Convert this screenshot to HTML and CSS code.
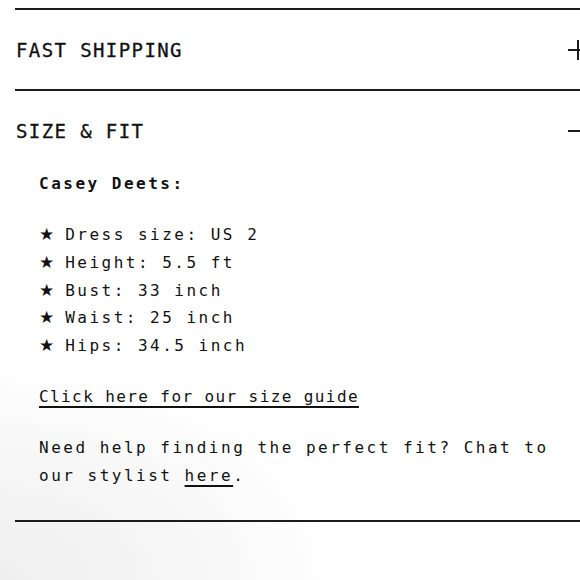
FILE: index.html
```html
<!DOCTYPE html>
<html lang="en">
<head>
<meta charset="utf-8">
<title>Size &amp; Fit</title>
<link rel="stylesheet" href="styles.css">
</head>
<body>
<section class="accordion">
  <div class="item">
    <div class="head">
      <span class="title">FAST SHIPPING</span>
      <span class="icon plus"></span>
    </div>
  </div>
  <div class="item open">
    <div class="head">
      <span class="title">SIZE &amp; FIT</span>
      <span class="icon minus"></span>
    </div>
    <div class="body">
      <p class="name">Casey Deets:</p>
      <ul class="stats">
        <li><span class="star">★</span> Dress size: US 2</li>
        <li><span class="star">★</span> Height: 5.5 ft</li>
        <li><span class="star">★</span> Bust: 33 inch</li>
        <li><span class="star">★</span> Waist: 25 inch</li>
        <li><span class="star">★</span> Hips: 34.5 inch</li>
      </ul>
      <p><a href="#" class="link guide">Click here for our size guide</a></p>
      <p>Need help finding the perfect fit? Chat to our stylist <a href="#" class="link">here</a>.</p>
    </div>
  </div>
</section>
</body>
</html>
```

FILE: styles.css
```css
html, body {
  margin: 0;
  padding: 0;
  height: 100%;
}
body {
  overflow: hidden;
  color: #111;
  font-family: "DejaVu Sans Mono", "Liberation Mono", monospace;
  background: radial-gradient(ellipse 60% 38% at 0% 100%, #efefef 0%, #f6f6f6 50%, #ffffff 100%);
}
.accordion {
  margin: 8px -8px 0 15px;
  border-top: 2px solid #1c1c1c;
}
.item {
  border-bottom: 2px solid #1c1c1c;
}
.head {
  display: flex;
  justify-content: space-between;
  align-items: center;
  height: 79px;
}
.title {
  font-size: 19px;
  letter-spacing: 1.4px;
  line-height: 24px;
  padding-left: 1px;
  -webkit-text-stroke: 0.3px #111;
}
.icon {
  position: relative;
  width: 20px;
  height: 20px;
  flex: none;
}
.icon::before,
.icon::after {
  content: "";
  position: absolute;
  background: #1c1c1c;
}
.icon::before {
  left: 0;
  right: 0;
  top: 9px;
  height: 2px;
}
.plus::after {
  top: 0;
  bottom: 0;
  left: 9px;
  width: 2px;
}
.body {
  padding: 0 0 30.5px 24px;
  font-size: 16px;
  letter-spacing: 2.5px;
  line-height: 27.75px;
}
.body p,
.stats {
  margin: 0 0 23.25px;
  padding: 0;
}
.body p:last-child {
  margin-bottom: 0;
}
.stats {
  list-style: none;
}
.star {
  display: inline-block;
  width: 14px;
  font-family: "DejaVu Sans", sans-serif;
  font-size: 17px;
  letter-spacing: 0;
}
.name {
  font-weight: bold;
}
.link {
  color: #111;
  text-decoration: underline;
  text-decoration-thickness: 1.5px;
  text-underline-offset: 4px;
}
.guide {
  letter-spacing: 1.4px;
}
```
